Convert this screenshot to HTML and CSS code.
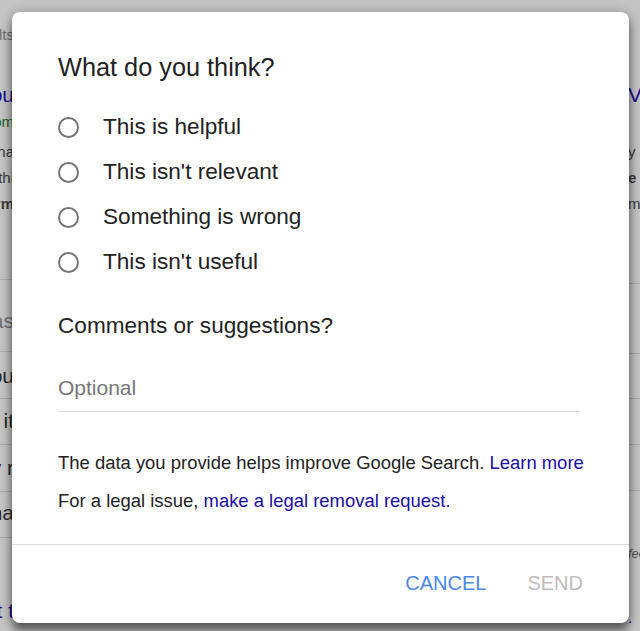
FILE: index.html
```html
<!DOCTYPE html>
<html>
<head>
<meta charset="utf-8">
<link rel="stylesheet" href="styles.css">
</head>
<body>
<div class="page">
  <div class="bg-col bg-left">
    <div class="frag frag-grey m22">results</div>
    <div class="frag frag-big frag-blue m34">About you</div>
    <div class="frag frag-green m1">www.google.com</div>
    <div class="frag m4">Google sha</div>
    <div class="frag">how to do thi</div>
    <div class="frag frag-bold">Inform</div>
    <div class="rule m62"></div>
    <div class="frag frag-big frag-grey m28">People as</div>
    <div class="rule m17"></div>
    <div class="frag frag-big m11">What do you</div>
    <div class="rule m9"></div>
    <div class="frag frag-big m9">Is it</div>
    <div class="rule m10"></div>
    <div class="frag frag-big m10">Why r</div>
    <div class="rule m10"></div>
    <div class="frag frag-big m8">Wha</div>
    <div class="rule m11"></div>
    <div class="frag frag-big frag-blue m60">About t</div>
  </div>
  <div class="bg-col bg-right">
    <div class="frag frag-big frag-blue m82">Videos</div>
    <div class="frag m31">y</div>
    <div class="frag frag-bold">e</div>
    <div class="frag">me</div>
    <div class="rule m66"></div>
    <div class="rule m69"></div>
    <div class="rule m44"></div>
    <div class="rule m45"></div>
    <div class="rule m45"></div>
    <div class="frag frag-small m55">feedback</div>
    <div class="frag frag-blue m43">.</div>
  </div>
</div>

<div class="dialog">
  <div class="dialog-body">
    <h1 class="title">What do you think?</h1>
    <ul class="options">
      <li class="option"><span class="radio"></span><span>This is helpful</span></li>
      <li class="option"><span class="radio"></span><span>This isn't relevant</span></li>
      <li class="option"><span class="radio"></span><span>Something is wrong</span></li>
      <li class="option"><span class="radio"></span><span>This isn't useful</span></li>
    </ul>
    <h2 class="subtitle">Comments or suggestions?</h2>
    <div class="field"><span class="placeholder">Optional</span></div>
    <p class="note">The data you provide helps improve Google Search. <a class="link">Learn more</a></p>
    <p class="note note2">For a legal issue, <a class="link">make a legal removal request.</a></p>
  </div>
  <div class="dialog-actions">
    <span class="btn btn-cancel">CANCEL</span>
    <span class="btn btn-send">SEND</span>
  </div>
</div>
</body>
</html>
```

FILE: styles.css
```css
html, body {
  margin: 0;
  padding: 0;
}
body {
  width: 640px;
  height: 631px;
  overflow: hidden;
  background: #c4c4c4;
  font-family: "Liberation Sans", Arial, sans-serif;
  position: relative;
}
.page {
  display: flex;
  justify-content: space-between;
  height: 631px;
}
.bg-col {
  display: flex;
  flex-direction: column;
  overflow: hidden;
  flex: none;
}
.bg-left {
  width: 14px;
}
.bg-left .frag {
  direction: rtl;
  text-align: left;
}
.bg-right {
  width: 12px;
}
.frag {
  font-size: 15px;
  line-height: 26px;
  height: 26px;
  color: #3a3a3a;
  white-space: nowrap;
  flex: none;
}
.frag-big { font-size: 21px; color: #2a2a2a; }
.frag-grey { color: #707070; }
.frag-blue { color: #1a0d90; }
.frag-green { color: #1d5f1d; }
.frag-bold { font-weight: bold; }
.frag-small { font-size: 13px; line-height: 16px; height: 16px; font-style: italic; color: #555; }
.rule {
  width: 100%;
  height: 1px;
  background: #aaaaaa;
  flex: none;
}
.m1 { margin-top: 1px; }
.m4 { margin-top: 4px; }
.m8 { margin-top: 8px; }
.m9 { margin-top: 9px; }
.m10 { margin-top: 10px; }
.m11 { margin-top: 11px; }
.m17 { margin-top: 17px; }
.m22 { margin-top: 22px; }
.m28 { margin-top: 28px; }
.m31 { margin-top: 31px; }
.m34 { margin-top: 34px; }
.m43 { margin-top: 43px; }
.m44 { margin-top: 44px; }
.m45 { margin-top: 45px; }
.m55 { margin-top: 55px; }
.m60 { margin-top: 60px; }
.m62 { margin-top: 62px; }
.m66 { margin-top: 66px; }
.m69 { margin-top: 69px; }
.m82 { margin-top: 82px; }

.dialog {
  position: absolute;
  left: 12px;
  top: 12px;
  width: 617px;
  height: 611px;
  background: #fff;
  border-radius: 8px;
  box-shadow: 0 8px 10px rgba(0, 0, 0, 0.5), 0 0 12px rgba(0, 0, 0, 0.22);
  display: flex;
  flex-direction: column;
  color: #222;
}
.dialog-body {
  padding: 40px 46px 0 46px;
  flex: 1;
}
.title {
  margin: 0;
  font-size: 25.3px;
  font-weight: normal;
  line-height: 30px;
}
.options {
  list-style: none;
  margin: 31px 0 0 0;
  padding: 0;
  display: flex;
  flex-direction: column;
  gap: 17px;
}
.option {
  display: flex;
  align-items: center;
  gap: 24px;
  font-size: 22.6px;
  line-height: 28px;
}
.radio {
  width: 17px;
  height: 17px;
  border: 2.5px solid #757575;
  border-radius: 50%;
  flex: none;
}
.subtitle {
  margin: 36px 0 0 0;
  font-size: 22.6px;
  font-weight: normal;
  line-height: 28px;
}
.field {
  margin-top: 36px;
  width: 522px;
  border-bottom: 1px solid #dadada;
  padding-bottom: 11px;
}
.placeholder {
  font-size: 21px;
  line-height: 24px;
  color: #777;
}
.note {
  margin: 40px 0 0 0;
  font-size: 18.45px;
  line-height: 22px;
  color: #222;
  white-space: nowrap;
}
.note2 { margin-top: 16px; }
.link { color: #1a0dab; text-decoration: none; }
.dialog-actions {
  border-top: 1px solid #dcdcdc;
  height: 79px;
  display: flex;
  justify-content: flex-end;
  align-items: center;
  gap: 41px;
  padding-right: 46px;
  padding-bottom: 2px;
  box-sizing: border-box;
}
.btn {
  font-size: 20px;
  line-height: 24px;
}
.btn-cancel { color: #4a86f0; }
.btn-send { color: #bdbdbd; }
```
